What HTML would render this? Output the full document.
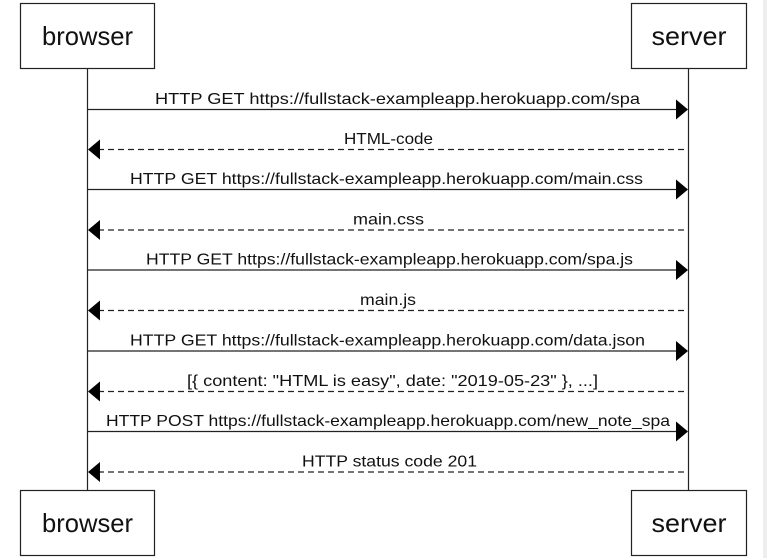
<!DOCTYPE html>
<html><head><style>
html,body{margin:0;padding:0;background:#fff;width:767px;height:558px;overflow:hidden}
svg{display:block}
text{font-family:"Liberation Sans",Arial,sans-serif;fill:#111}
</style></head><body>
<svg width="767" height="558" viewBox="0 0 767 558">
<rect x="763" y="0" width="4" height="558" fill="#eee"/>
<g stroke="#222" stroke-width="1.2" fill="#fff">
<rect x="20.5" y="3.5" width="134" height="65"/>
<rect x="631.5" y="3.5" width="115" height="65"/>
<rect x="20.5" y="490.5" width="134" height="65"/>
<rect x="631.5" y="490.5" width="115" height="65"/>
</g>
<g stroke="#222" stroke-width="1.2">
<line x1="87.5" y1="69" x2="87.5" y2="490"/>
<line x1="688.5" y1="69" x2="688.5" y2="490"/>
</g>
<g font-size="26" text-anchor="middle">
<text x="87.5" y="45" textLength="91" lengthAdjust="spacingAndGlyphs">browser</text>
<text x="689" y="45" textLength="75" lengthAdjust="spacingAndGlyphs">server</text>
<text x="87.5" y="532" textLength="91" lengthAdjust="spacingAndGlyphs">browser</text>
<text x="689" y="532" textLength="75" lengthAdjust="spacingAndGlyphs">server</text>
</g>
<g stroke="#222" stroke-width="1.2">
<line x1="88" y1="109.5" x2="678" y2="109.5"/>
<line x1="98" y1="149.5" x2="688" y2="149.5" stroke-dasharray="6,4"/>
<line x1="88" y1="189.5" x2="678" y2="189.5"/>
<line x1="98" y1="230" x2="688" y2="230" stroke-dasharray="6,4"/>
<line x1="88" y1="270" x2="678" y2="270"/>
<line x1="98" y1="310.5" x2="688" y2="310.5" stroke-dasharray="6,4"/>
<line x1="88" y1="351" x2="678" y2="351"/>
<line x1="98" y1="391.5" x2="688" y2="391.5" stroke-dasharray="6,4"/>
<line x1="88" y1="431.5" x2="678" y2="431.5"/>
<line x1="98" y1="472" x2="688" y2="472" stroke-dasharray="6,4"/>
</g>
<g fill="#000">
<path d="M688 109.5 L676 99.5 L676 119.5Z"/>
<path d="M88 149.5 L100 139.5 L100 159.5Z"/>
<path d="M688 189.5 L676 179.5 L676 199.5Z"/>
<path d="M88 230 L100 220 L100 240Z"/>
<path d="M688 270 L676 260 L676 280Z"/>
<path d="M88 310.5 L100 300.5 L100 320.5Z"/>
<path d="M688 351 L676 341 L676 361Z"/>
<path d="M88 391.5 L100 381.5 L100 401.5Z"/>
<path d="M688 431.5 L676 421.5 L676 441.5Z"/>
<path d="M88 472 L100 462 L100 482Z"/>
</g>
<g font-size="16" text-anchor="middle">
<text x="397.5" y="104" textLength="485" lengthAdjust="spacingAndGlyphs">HTTP GET https://fullstack-exampleapp.herokuapp.com/spa</text>
<text x="388.5" y="144" textLength="89" lengthAdjust="spacingAndGlyphs">HTML-code</text>
<text x="386.5" y="184" textLength="513" lengthAdjust="spacingAndGlyphs">HTTP GET https://fullstack-exampleapp.herokuapp.com/main.css</text>
<text x="388.5" y="224.5" textLength="71" lengthAdjust="spacingAndGlyphs">main.css</text>
<text x="389.5" y="264.5" textLength="487" lengthAdjust="spacingAndGlyphs">HTTP GET https://fullstack-exampleapp.herokuapp.com/spa.js</text>
<text x="388" y="305" textLength="56" lengthAdjust="spacingAndGlyphs">main.js</text>
<text x="387.5" y="345.5" textLength="515" lengthAdjust="spacingAndGlyphs">HTTP GET https://fullstack-exampleapp.herokuapp.com/data.json</text>
<text x="392.5" y="386" textLength="411" lengthAdjust="spacingAndGlyphs">[{ content: "HTML is easy", date: "2019-05-23" }, ...]</text>
<text x="388" y="426" textLength="564" lengthAdjust="spacingAndGlyphs">HTTP POST https://fullstack-exampleapp.herokuapp.com/new_note_spa</text>
<text x="389.5" y="466.5" textLength="175" lengthAdjust="spacingAndGlyphs">HTTP status code 201</text>
</g>
</svg>
</body></html>
